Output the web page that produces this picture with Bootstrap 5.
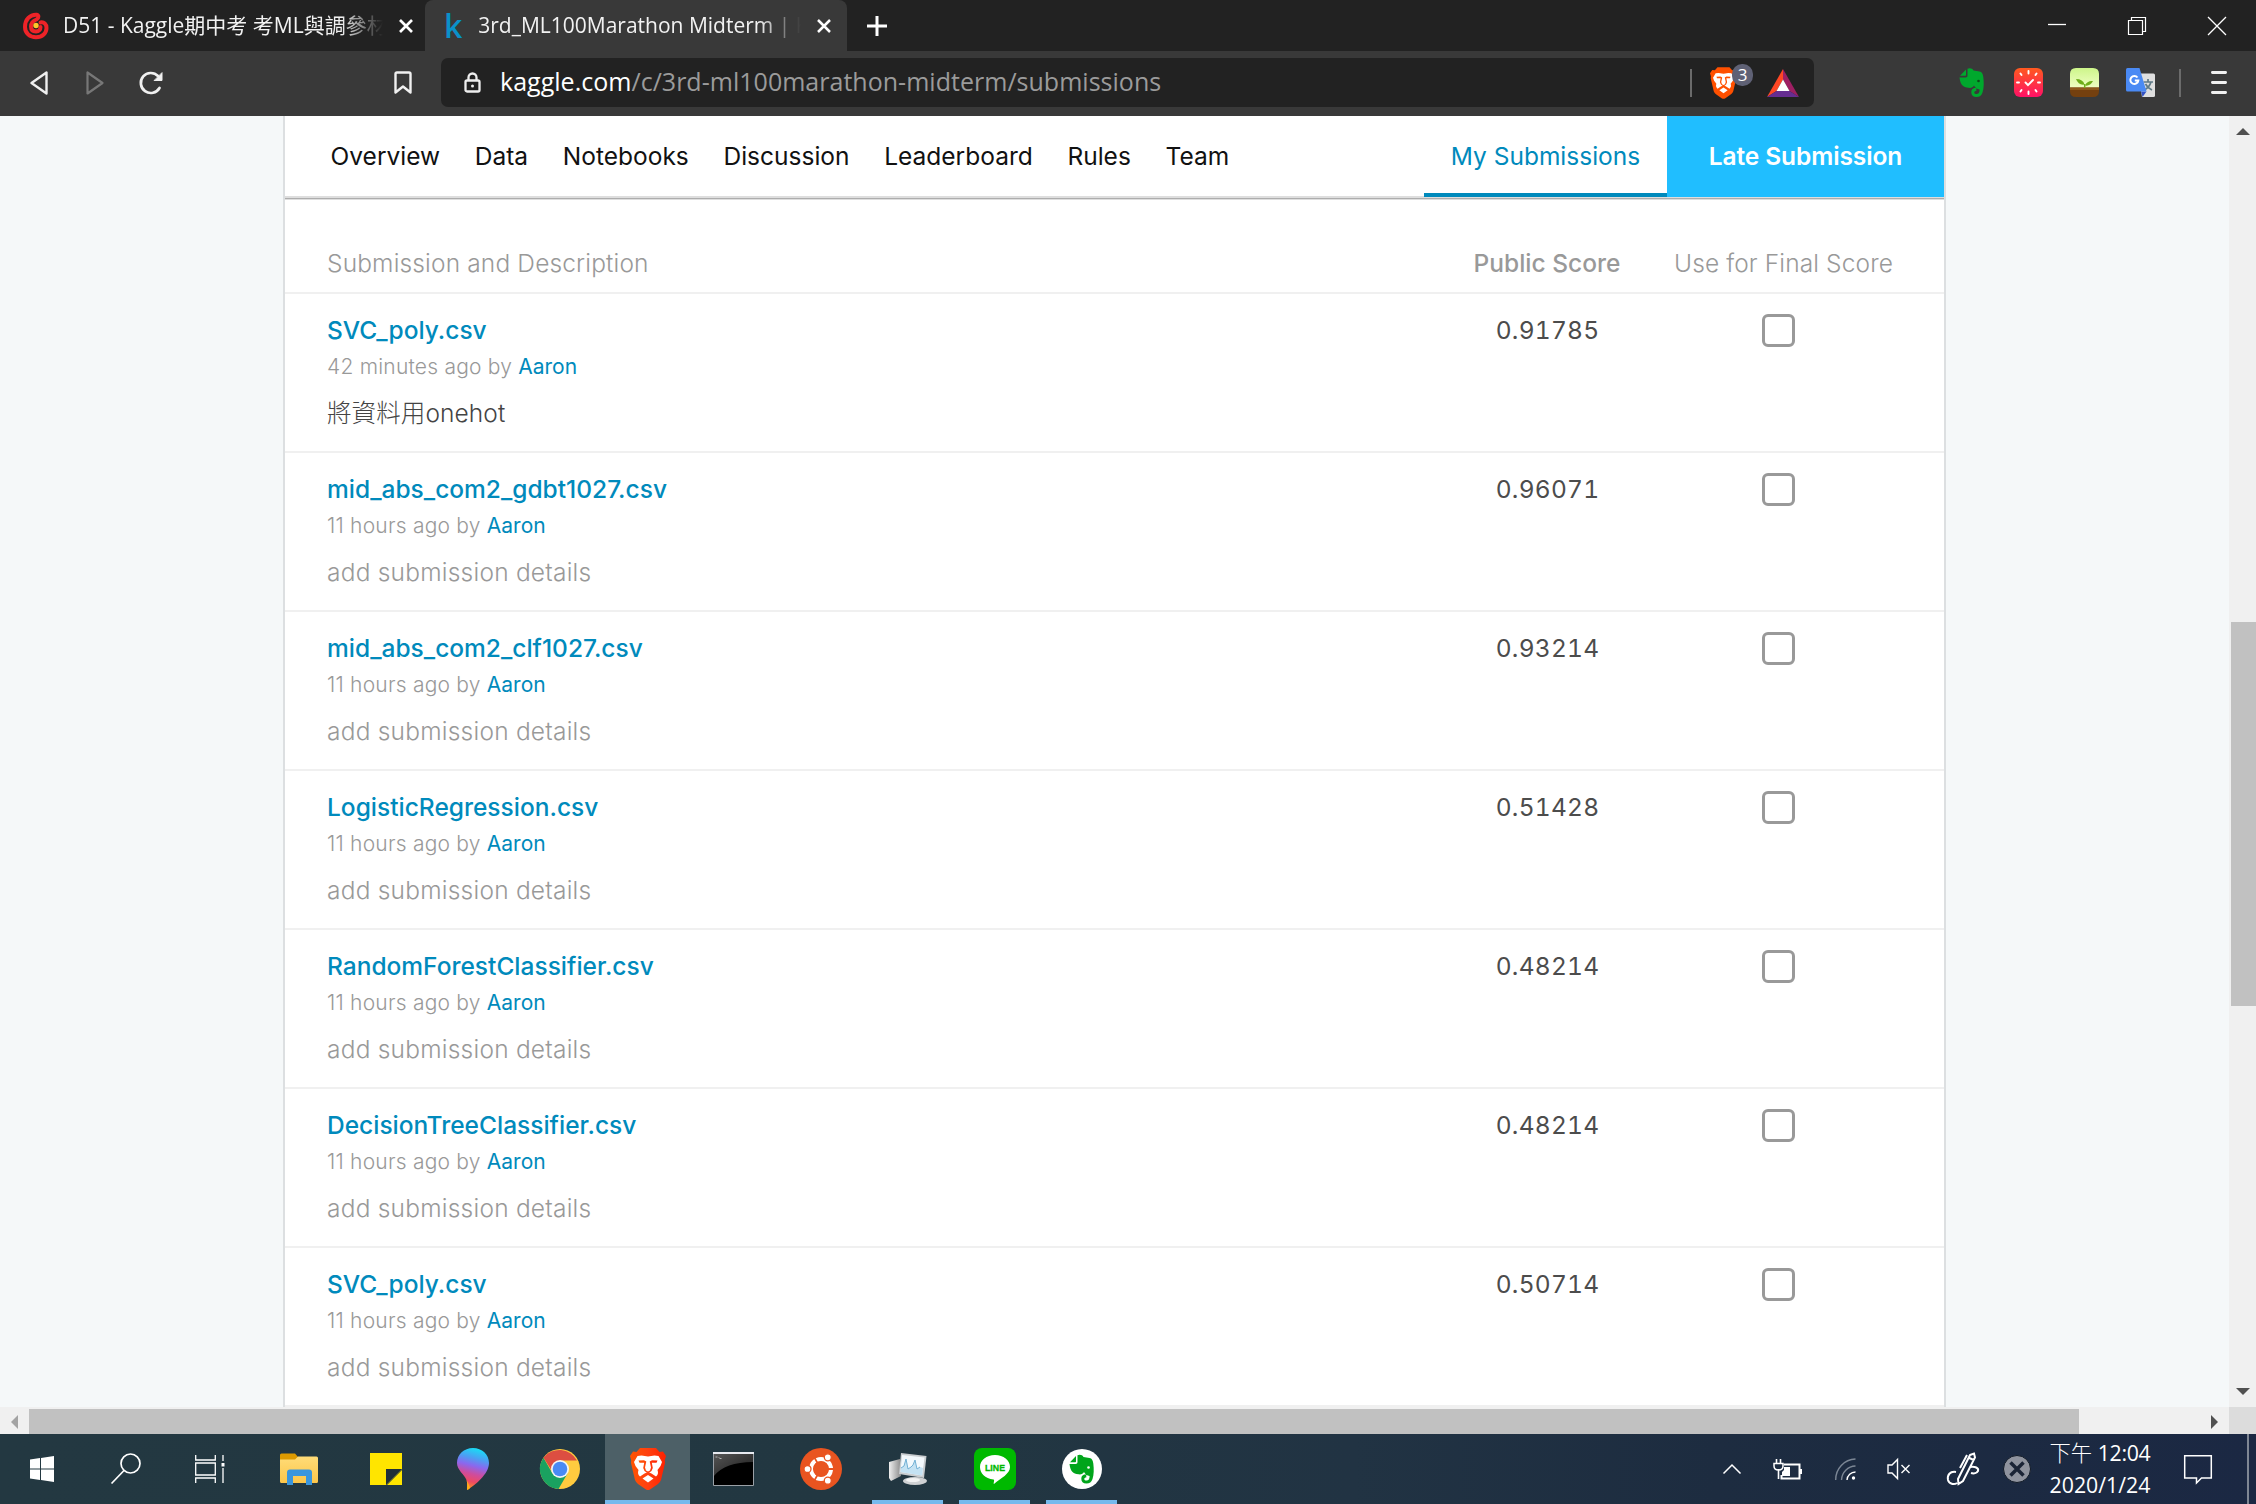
<!DOCTYPE html>
<html lang="zh-Hant">
<head>
<meta charset="utf-8">
<meta name="viewport" content="width=device-width, initial-scale=1">
<title>3rd_ML100Marathon Midterm | Kaggle</title>
<link rel="stylesheet" href="https://cdn.jsdelivr.net/npm/bootstrap@5.3.0/dist/css/bootstrap.min.css">
<style>
html,body{height:100%}
body{width:2256px;height:1504px;overflow:hidden;background:#f5f8f9;font-family:Inter,"Noto Sans CJK TC",sans-serif;font-size:24.5px;line-height:35px;color:#4c4c4c}
svg{display:block;flex:none;overflow:visible}
a{color:#008abc;text-decoration:none}

/* browser chrome */
.chrome-ui{font-family:"Open Sans","Noto Sans CJK TC",sans-serif}
.tabstrip{height:51px;background:#222;color:#f2f2f2;font-size:21px;line-height:51px}
.tab-idle{width:425px;padding-left:22px;padding-right:12px}
.tab-live{width:422px;padding-left:19px;padding-right:15px;background:#393939;border-radius:8px 8px 0 0}
.tab-title{overflow:hidden;-webkit-mask-image:linear-gradient(90deg,#000 calc(100% - 42px),transparent);mask-image:linear-gradient(90deg,#000 calc(100% - 42px),transparent)}
.k-mark{font-family:"Open Sans",sans-serif;font-size:32px;font-weight:600;color:#0a91c9;width:37px;line-height:47px}
.toolbar{height:65px;background:#393939;padding-bottom:2px}
.addr{width:1373px;height:49px;margin-left:29px;background:#222;border-radius:7px;padding-left:23px;font-size:25px;line-height:47px;color:#9b9b9b}
.addr b{font-weight:400;color:#fff}
.addr .url{letter-spacing:.02px;padding-bottom:2px}
.sep{width:2px;height:28px;background:#6b6b6b}
.shield-count{left:22px;top:-3px;width:21px;height:22px;border-radius:10px;background:#5f6175;font-size:17px;line-height:22px;color:#fff}

/* page */
.view{height:1291px}
.sheet{width:1663px;margin-left:283px;background:#fff;border:solid #dcdfe1;border-width:0 2px}
.comp-nav{height:84px;color:#000;line-height:81px;border-bottom:1px solid #dedede;box-shadow:inset 0 -1px #adadad,inset 0 -3px #dedede}
.comp-nav a{color:#111}
.comp-nav .links{padding-left:45.6px;gap:34.7px}
.comp-nav .mine{width:243px;height:81px;color:#008abc;box-shadow:inset 0 -4px #008abc}
.comp-nav .late{width:277px;height:81px;background:#20beff;color:#fff;font-weight:600;letter-spacing:-.1px}
.sub-head{height:92px;padding-top:46px;color:#999;font-weight:300}
.sub-row{height:159px;border-top:2px solid #f0f0f0;padding-top:19px}
.sub-head,.sub-row{padding-left:42px;padding-right:35px}
.c-score{width:200px}
.c-final{width:262px}
.sub-row .file{font-weight:500}
.sub-row .meta{font-size:21px;line-height:30px;margin-top:4px;color:#999;font-weight:300;letter-spacing:.22px}
.sub-row .meta a{font-weight:400;letter-spacing:0}
.sub-row .desc{margin-top:14px;color:#999;font-weight:300;letter-spacing:.22px}
.sub-row .desc.own{color:#444;letter-spacing:.1px}
.sub-row .c-score{font-feature-settings:"tnum";letter-spacing:.25px;padding-left:1px}
.sub-row .form-check-input{width:33px;height:33px;margin:1px 0 0;border:3px solid #999;border-radius:6px;background-color:#fff}

/* scrollbars */
.vbar{width:27px;background:#f0f0f0}
.vthumb{height:384px;margin-left:2px;background:#c1c1c1}
.hbar{height:27px;background:#f0f0f0}
.hthumb{width:2050px;height:25px;background:#c1c1c1}
.corner{width:27px;height:27px;background:#dcdcdc}

/* taskbar */
.taskbar{height:70px;background:linear-gradient(90deg,#233841 0,#223741 38%,#213343 60%,#1d2c40 76%,#1b2843 100%);color:#fff}
.slot3{width:84px}
.app{width:87px}
.app.run{background:linear-gradient(#76b9ed,#76b9ed) 50% 100%/71px 4px no-repeat}
.app.front{width:85px;margin-left:2px;background:#4d6067;border-bottom:4px solid #76b9ed;padding-top:4px}
.line-text{font:700 9.5px "Liberation Sans",sans-serif}
.clock{width:138px;padding-bottom:2px;font:400 21.3px/32px "Open Sans","Noto Sans CJK TC",sans-serif}
.clock span{letter-spacing:-.3px}
.clock i{font-style:normal;font-family:"Noto Sans CJK TC",sans-serif;font-weight:300}
</style>
<script src="https://cdn.jsdelivr.net/npm/bootstrap@5.3.0/dist/js/bootstrap.bundle.min.js"></script>
</head>
<body>
<svg width="0" height="0" class="position-absolute" aria-hidden="true">
  <defs>
    <linearGradient id="gBrave"><stop offset="0" stop-color="#ff5500"/><stop offset=".5" stop-color="#ff4010"/><stop offset="1" stop-color="#ff2000"/></linearGradient>
    <linearGradient id="gClock" x2="0" y2="1"><stop offset="0" stop-color="#ff5a1f"/><stop offset="1" stop-color="#ff1166"/></linearGradient>
    <linearGradient id="gLeaf" x2="0" y2="1"><stop offset="0" stop-color="#cdf58a"/><stop offset="1" stop-color="#f0ffc4"/></linearGradient>
    <linearGradient id="gFold" x2="0" y2="1"><stop offset="0" stop-color="#ffdc78"/><stop offset="1" stop-color="#fcc64a"/></linearGradient>
    <linearGradient id="gDrop" x1=".6" x2=".4" y2="1"><stop offset="0" stop-color="#16dff5"/><stop offset=".25" stop-color="#4f9cf2"/><stop offset=".42" stop-color="#8a68ee"/><stop offset=".62" stop-color="#cf4c9c"/><stop offset=".8" stop-color="#ee4a63"/><stop offset="1" stop-color="#ff9c1a"/></linearGradient>
    <linearGradient id="gCmd" x2="1" y2="1"><stop offset="0" stop-color="#555"/><stop offset="1" stop-color="#1a1a1a"/></linearGradient>
    <linearGradient id="gCase" x2="1"><stop offset="0" stop-color="#eee"/><stop offset="1" stop-color="#8b8b8b"/></linearGradient>
    <symbol id="lion" viewBox="0 0 36 42" overflow="visible">
      <path d="M10 0H26L29.500 4L33 3.500L36 8L34.800 12L35 15L31 32Q30 34.500 28 36L20 41.500Q18 42.500 16 41.500L8 36Q6 34.500 5 32L1 15L1.200 12L0 8L3 3.500L6.500 4Z"/>
      <path fill="#fff" d="M11.500 7.500L18 8.500L24.500 7.500L28.500 8L32 14L30.500 18L27.500 22Q29 26 26 28.500L21.500 25.500L18 24L14.500 25.500L10 28.500Q7 26 8.500 22L5.500 18L4 14L7.500 8ZM12.500 30.500L18 27L23.500 30.500L18 34.500Z"/>
      <path d="M8.500 12.600L14 12.200L16.300 13.500L15 19.500L16 22.500L18 23.500L20 22.500L21 19.500L19.700 13.500L22 12.200L27.500 12.600L26.500 14.800L21.800 14.800L22.800 20L21.500 23L18 25.500L14.500 23L13.200 20L14.200 14.800L9.500 14.800Z"/>
    </symbol>
    <symbol id="elephant" viewBox="0 0 25 29" overflow="visible">
      <path d="M8.500.8C10.500-.2 13.500.2 14.500 2.500L20.500 3.500C23 4 23.800 5.500 24.300 9C25 15 25 20 23.500 24.500C22.500 27.500 20.500 29 17.500 29C14 29 12.300 27 12.300 24.200C12.300 21.500 14 19.800 17.300 19.800V23C16 23 15.300 23.500 15.300 24.500C15.300 25.600 16.200 26 17.500 26C19.600 26 20.600 24.600 20.600 21.500C18 21 16.300 19.800 15 17.500C14 19.300 12 20.200 9.500 19.800C4 19 1.500 17.500 .5 9.500H6.500C8 9.500 8.500 8.800 8.500 7.500Z"/>
      <path d="M1 7.800L7 1.500V7Q7 7.800 6.200 7.800Z"/>
    </symbol>
  </defs>
</svg>

<div class="d-flex flex-column">
  <header class="chrome-ui">
    <div class="tabstrip d-flex">
      <div class="tab-idle d-flex align-items-center">
        <svg width="28" height="28" viewBox="0 0 28 28" fill="none"><path d="M14.500 2.800C8 2.500 3 7.500 3 15C3 21.500 8 25.200 14 25.200C20.500 25.200 24.500 21 24.500 16C24.500 12 22 9.800 18.500 10.500M14.500 2.800C17 3.500 17 6 14.500 7.500C10.500 9 9 11.500 9 14.500C9 17.800 11 19.500 14 19.500C17 19.500 18.500 17.500 18.500 15" stroke="#ee2328" stroke-width="4" stroke-linecap="round"/><circle cx="14" cy="13.500" r="2.700" fill="#ffc629"/></svg>
        <div class="tab-title text-nowrap flex-fill ms-0 me-3" style="padding-left:13px">D51 - Kaggle期中考 考ML與調參材</div>
        <svg width="14" height="14" viewBox="0 0 14 14" stroke="#fff" stroke-width="2.700"><path d="M1 1L13 13M13 1L1 13"/></svg>
      </div>
      <div class="tab-live d-flex align-items-center">
        <span class="k-mark">k</span>
        <div class="tab-title text-nowrap flex-fill me-3" style="padding-left:3px">3rd_ML100Marathon Midterm | Kaggle</div>
        <svg width="14" height="14" viewBox="0 0 14 14" stroke="#fff" stroke-width="2.500" style="margin-right:1px"><path d="M1 1L13 13M13 1L1 13"/></svg>
      </div>
      <div class="d-flex align-items-center flex-fill" style="padding-left:20px">
        <svg width="20" height="20" stroke="#fff" stroke-width="3"><path d="M10 0V20M0 10H20"/></svg>
      </div>
      <div class="d-flex align-items-center" style="gap:62px;padding-right:30px">
        <svg width="18" height="18" stroke="#fff" stroke-width="1.300"><path d="M0 7.500H18"/></svg>
        <svg width="18" height="18" fill="none" stroke="#fff" stroke-width="1.200"><path d="M.500 3.500h14v14h-14zM3.500 3.500V.500h14v14h-3"/></svg>
        <svg width="18" height="18" stroke="#fff" stroke-width="1.300"><path d="M0 0L18 18M18 0L0 18"/></svg>
      </div>
    </div>
    <div class="toolbar d-flex align-items-center">
      <svg width="18" height="24" viewBox="0 0 18 24" fill="none" stroke="#f0f0f0" stroke-width="2.400" stroke-linejoin="round" style="margin-left:30px"><path d="M16.500 1.500V22.500L1.500 12Z"/></svg>
      <svg width="18" height="24" viewBox="0 0 18 24" fill="none" stroke="#777" stroke-width="2.200" stroke-linejoin="round" style="margin-left:38px"><path d="M1.500 1.500V22.500L16.500 12Z"/></svg>
      <svg width="24" height="24" viewBox="0 0 24 24" fill="none" stroke="#f0f0f0" stroke-width="2.700" stroke-linecap="round" style="margin-left:35px"><path d="M20.500 17A10 10 0 1 1 19 5"/><path d="M23 2V9.500H15.500Z" fill="#f0f0f0" stroke-width="1"/></svg>
      <svg width="18" height="23" viewBox="0 0 18 23" fill="none" stroke="#f0f0f0" stroke-width="2.400" stroke-linejoin="round" style="margin-left:231px"><path d="M1.500 3Q1.500 1.500 3 1.500H15Q16.500 1.500 16.500 3V21.500L9 15.500L1.500 21.500Z"/></svg>
      <div class="addr d-flex align-items-center">
        <svg width="17" height="21" viewBox="0 0 17 21" fill="none" stroke="#eee" stroke-width="2.300"><rect x="1.500" y="8.500" width="14" height="11" rx="1.500"/><path d="M4.500 8V5.500A4 4 0 0 1 12.500 5.500V8"/><circle cx="8.500" cy="14" r="1.500" fill="#eee" stroke="none"/></svg>
        <div class="url text-nowrap" style="margin-left:19px"><b>kaggle.com</b>/c/3rd-ml100marathon-midterm/submissions</div>
        <div class="d-flex align-items-center ms-auto" style="padding-right:15px">
          <div class="sep"></div>
          <div class="position-relative" style="margin-left:18px"><svg width="27" height="32" fill="#ff5000"><use href="#lion"/></svg><span class="shield-count position-absolute text-center">3</span></div>
          <svg width="32" height="28" viewBox="0 0 32 28" style="margin-left:30px"><path d="M16 0L0 28L9.500 22L16 10.500Z" fill="#ff4724"/><path d="M16 0L32 28L22.500 22L16 10.500Z" fill="#9e1f63"/><path d="M0 28H32L22.500 22H9.500Z" fill="#662d91"/><path d="M16 10.500L22.500 22H9.500Z" fill="#fff"/></svg>
        </div>
      </div>
      <div class="d-flex align-items-center ms-auto" style="padding-right:29px">
        <svg width="25" height="29" fill="#00a82d"><use href="#elephant"/><circle cx="19.500" cy="13" r="1.300" fill="#0b4a1a"/></svg>
        <svg width="29" height="29" viewBox="0 0 29 29" style="margin-left:30px"><rect width="29" height="29" rx="6" fill="url(#gClock)"/><g stroke="#fff" stroke-width="1.900" stroke-linecap="round" fill="none"><path d="M14.500 3v2.500M14.500 23.500v2.500M3 14.500h2M24 14.500H26M6.500 5.500l1 1.500M22.500 5.500l-1 1.500M6.500 23.500l1-1.500M22.500 23.500l-1-1.500"/><path d="M11.500 14.500l2.500 2.700l5-5.200"/></g></svg>
        <svg width="29" height="29" viewBox="0 0 29 29" style="margin-left:27px"><path d="M6 0H23Q29 0 29 6V20H0V6Q0 0 6 0Z" fill="url(#gLeaf)"/><path d="M0 19.500H29V23Q29 29 23 29H6Q0 29 0 23Z" fill="#74400f"/><path d="M0 19.500H29V22H0Z" fill="#8e5a1c"/><path d="M6 11Q13 11 14.500 16.500Q8.500 17.500 6 11ZM23 13Q17 12.500 15 17.500Q20 18.500 23 13Z" fill="#6fae19"/><path d="M14.700 16V20" stroke="#6fae19" stroke-width="1.500"/></svg>
        <svg width="29" height="29" viewBox="0 0 29 29" style="margin-left:27px"><path d="M12 5.500H27.500Q29 5.500 29 7V27.500Q29 29 27.500 29H16Z" fill="#dfdfdf"/><path d="M17.500 14H27M22 11V14M25 14Q23.500 19 18.500 22M19.500 16Q21.500 20 26 22" stroke="#5f7a86" stroke-width="1.700" fill="none"/><path d="M15 23.500H20.500L16.500 29Z" fill="#3352c4"/><path d="M1.500 0H13.500L20.500 23.500H1.500Q0 23.500 0 22V1.500Q0 0 1.500 0Z" fill="#4a8af4"/><path d="M11.500 9.500A4 4 0 1 0 12.300 12.500H8.800" stroke="#fff" stroke-width="2" fill="none"/></svg>
        <div class="sep" style="margin-left:24px"></div>
        <svg width="16" height="23" stroke="#f0f0f0" stroke-width="2.800" stroke-linecap="round" style="margin-left:30px"><path d="M1.400 1.500H14.600M1.400 11.500H14.600M1.400 21.500H14.600"/></svg>
      </div>
    </div>
  </header>

  <div class="view d-flex overflow-hidden">
    <main class="flex-fill">
      <div class="sheet">
        <nav class="comp-nav d-flex">
          <div class="links d-flex flex-fill"><a href="#">Overview</a><a href="#">Data</a><a href="#">Notebooks</a><a href="#">Discussion</a><a href="#">Leaderboard</a><a href="#">Rules</a><a href="#">Team</a></div>
          <a href="#" class="mine text-center">My Submissions</a>
          <a href="#" class="late text-center">Late Submission</a>
        </nav>
        <div class="sub-head d-flex">
          <div class="flex-fill" style="letter-spacing:.15px">Submission and Description</div>
          <div class="c-score text-center" style="font-weight:500">Public Score</div>
          <div class="c-final text-center" style="padding-left:11px;letter-spacing:.12px">Use for Final Score</div>
        </div>
        <section class="sub-row d-flex">
          <div class="flex-fill"><a href="#" class="file d-block">SVC_poly.csv</a><div class="meta">42 minutes ago by <a href="#">Aaron</a></div><div class="desc own">將資料用onehot</div></div>
          <div class="c-score text-center">0.91785</div>
          <div class="c-final d-flex justify-content-center"><input class="form-check-input" type="checkbox"></div>
        </section>
        <section class="sub-row d-flex">
          <div class="flex-fill"><a href="#" class="file d-block">mid_abs_com2_gdbt1027.csv</a><div class="meta">11 hours ago by <a href="#">Aaron</a></div><div class="desc">add submission details</div></div>
          <div class="c-score text-center">0.96071</div>
          <div class="c-final d-flex justify-content-center"><input class="form-check-input" type="checkbox"></div>
        </section>
        <section class="sub-row d-flex">
          <div class="flex-fill"><a href="#" class="file d-block">mid_abs_com2_clf1027.csv</a><div class="meta">11 hours ago by <a href="#">Aaron</a></div><div class="desc">add submission details</div></div>
          <div class="c-score text-center">0.93214</div>
          <div class="c-final d-flex justify-content-center"><input class="form-check-input" type="checkbox"></div>
        </section>
        <section class="sub-row d-flex">
          <div class="flex-fill"><a href="#" class="file d-block">LogisticRegression.csv</a><div class="meta">11 hours ago by <a href="#">Aaron</a></div><div class="desc">add submission details</div></div>
          <div class="c-score text-center">0.51428</div>
          <div class="c-final d-flex justify-content-center"><input class="form-check-input" type="checkbox"></div>
        </section>
        <section class="sub-row d-flex">
          <div class="flex-fill"><a href="#" class="file d-block">RandomForestClassifier.csv</a><div class="meta">11 hours ago by <a href="#">Aaron</a></div><div class="desc">add submission details</div></div>
          <div class="c-score text-center">0.48214</div>
          <div class="c-final d-flex justify-content-center"><input class="form-check-input" type="checkbox"></div>
        </section>
        <section class="sub-row d-flex">
          <div class="flex-fill"><a href="#" class="file d-block">DecisionTreeClassifier.csv</a><div class="meta">11 hours ago by <a href="#">Aaron</a></div><div class="desc">add submission details</div></div>
          <div class="c-score text-center">0.48214</div>
          <div class="c-final d-flex justify-content-center"><input class="form-check-input" type="checkbox"></div>
        </section>
        <section class="sub-row d-flex">
          <div class="flex-fill"><a href="#" class="file d-block">SVC_poly.csv</a><div class="meta">11 hours ago by <a href="#">Aaron</a></div><div class="desc">add submission details</div></div>
          <div class="c-score text-center">0.50714</div>
          <div class="c-final d-flex justify-content-center"><input class="form-check-input" type="checkbox"></div>
        </section>
        <section class="sub-row"></section>
      </div>
    </main>
    <div class="vbar d-flex flex-column">
      <svg width="27" height="506"><path d="M7 19L14 12L21 19Z" fill="#505050"/></svg>
      <div class="vthumb"></div>
      <svg width="27" height="27" class="mt-auto"><path d="M7 8L14 15L21 8Z" fill="#505050"/></svg>
    </div>
  </div>

  <div class="hbar d-flex">
    <svg width="29" height="27"><path d="M18 8V22L11 15Z" fill="#a3a3a3"/></svg>
    <div class="hthumb align-self-end"></div>
    <svg width="27" height="27" class="ms-auto"><path d="M9 8V22L16 15Z" fill="#505050"/></svg>
    <div class="corner"></div>
  </div>

  <footer class="taskbar d-flex align-items-stretch">
    <div class="slot3 d-flex align-items-center justify-content-center"><svg width="24" height="28" viewBox="0 0 24 28" fill="#fff"><path d="M0 4.500L10 3V13.500H0ZM11 2.900L24 1V13.500H11ZM0 14.500H10V25L0 23.500ZM11 14.500H24V27L11 25.100Z"/></svg></div>
    <div class="slot3 d-flex align-items-center justify-content-center"><svg width="30" height="34" viewBox="0 0 30 34" fill="none" stroke="#fff" stroke-width="1.700"><circle cx="19.500" cy="11.500" r="9.500"/><path d="M13 18.500L.500 31.500"/></svg></div>
    <div class="slot3 d-flex align-items-center justify-content-center"><svg width="30" height="28" viewBox="0 0 30 28" fill="none" stroke="#fff" stroke-width="1.300"><path d="M.700 0V5H20.300V0M.700 8h19.600v12H.700zM.700 28V23H20.300V28M28 0V6M28 13V28"/><path d="M26.500 8h3v3.500h-3z" fill="#fff" stroke="none"/></svg></div>
    <div class="app d-flex align-items-center justify-content-center" style="margin-left:3px"><svg width="38" height="32" viewBox="0 0 38 32"><path d="M0 2Q0 .500 1.500 .500H15L18 4V9H0Z" fill="#dd9a00"/><path d="M0 6.500H15L18 3.500H36.500Q38 3.500 38 5V28.500Q38 30 36.500 30H1.500Q0 30 0 28.500Z" fill="url(#gFold)"/><path d="M7 32V19.500Q7 16.500 10 16.500H29Q32 16.500 32 19.500V32H26V23H13V32Z" fill="#3a96dd"/></svg></div>
    <div class="app d-flex align-items-center justify-content-center"><svg width="32" height="32" viewBox="0 0 32 32"><path d="M0 0H32V16L16 32H0Z" fill="#ffe500"/><path d="M16 32V16H32Z" fill="#1f2f38"/><path d="M17 32H32V17Z" fill="#ffe500"/></svg></div>
    <div class="app d-flex align-items-center justify-content-center"><svg width="32" height="42" viewBox="0 0 32 42"><path d="M16 0C25 0 32 6.500 32 15C32 26 18 37 10.500 42C9.500 41 11 37 9.500 32C7 26 0 22 0 15C0 6.500 7 0 16 0Z" fill="url(#gDrop)"/><path d="M9.500 32C11 35 12 36 13 40L10.500 42C9.500 41 11 37 9.500 32Z" fill="#ffae17"/></svg></div>
    <div class="app d-flex align-items-center justify-content-center"><svg width="40" height="40" viewBox="0 0 40 40"><circle cx="20" cy="20" r="20" fill="#ffcb3f"/><path d="M3.500 8.700A20 20 0 0 0 18.500 40L27.500 24.500L12.500 24.500Z" fill="#1aa260"/><path d="M3.500 8.700A20 20 0 0 1 37 11.500H20L12 22Z" fill="#dc4e41"/><circle cx="20" cy="20" r="9" fill="#f4f4f4"/><circle cx="20" cy="20" r="7.300" fill="#4a8af4"/></svg></div>
    <div class="app front d-flex align-items-center justify-content-center"><svg width="36" height="42" fill="url(#gBrave)"><use href="#lion"/></svg></div>
    <div class="app d-flex align-items-center justify-content-center"><svg width="41" height="34" viewBox="0 0 41 34"><path d="M.500 .500H40.500V33.500H.500Z" fill="#000" stroke="#9aa0a6"/><path d="M1 2H40V10Q12 10 1 24Z" fill="url(#gCmd)"/><path d="M0 0H41V2H0Z" fill="#e8eaf0"/><path d="M2.500 5h2M6 5v.800M6.500 6.500h2" stroke="#ccc" stroke-width=".800"/></svg></div>
    <div class="app d-flex align-items-center justify-content-center"><svg width="42" height="42" viewBox="0 0 42 42"><circle cx="21" cy="21" r="21" fill="#e95420"/><circle cx="21" cy="21" r="10" fill="none" stroke="#fff" stroke-width="4"/><g stroke="#e95420" stroke-width="1.800"><path d="M21 21H35M21 21L14 8.900M21 21L14 33.100" /></g><circle cx="21" cy="21" r="7.500" fill="#e95420"/><g fill="#fff" stroke="#e95420" stroke-width="1.300"><circle cx="7.500" cy="21" r="3.500"/><circle cx="27.800" cy="9.300" r="3.500"/><circle cx="27.800" cy="32.700" r="3.500"/></g></svg></div>
    <div class="app run d-flex align-items-center justify-content-center"><svg width="38" height="32" viewBox="0 0 38 32"><path d="M0 9L11 6L12 23L2 28L0 25Z" fill="url(#gCase)"/><path d="M12 0L37.500 3L35 25L10 21Z" fill="#c9cdd0"/><path d="M13 2L35.500 4.500L33.200 22.500L11.500 19Z" fill="#f3f9fd"/><path d="M12 15L15 13L17 6L19 16L22 14L24 12L26 7L28 16L31 14L34 15L33.200 22.500L11.500 19Z" fill="#c4e2f3"/><path d="M12 15L15 13L17 6L19 16L22 14L24 12L26 7L28 16L31 14" fill="none" stroke="#72b0d4"/><ellipse cx="26" cy="28" rx="12" ry="4" fill="#cfd1d3"/><ellipse cx="24" cy="27" rx="7" ry="2" fill="#f2f2f2"/></svg></div>
    <div class="app run d-flex align-items-center justify-content-center"><svg width="42" height="42" viewBox="0 0 42 42"><rect width="42" height="42" rx="8" fill="#00b900"/><path d="M21 7C29.500 7 36 12 36 19C36 26 27 30 20 36C19 35.500 21 32 19.500 31.500C11 30.500 6 25.500 6 19C6 12 12.500 7 21 7Z" fill="#fff"/><text x="21" y="23" text-anchor="middle" fill="#00b900" stroke="#00b900" stroke-width=".300" class="line-text" textLength="20" lengthAdjust="spacingAndGlyphs">LINE</text></svg></div>
    <div class="app run d-flex align-items-center justify-content-center"><svg width="40" height="40" viewBox="0 0 40 40"><circle cx="20" cy="20" r="20" fill="#fff"/><svg x="7" y="5.500" width="25" height="29" fill="#00a51b"><use href="#elephant"/><circle cx="19.500" cy="13" r="1.300" fill="#fff"/></svg></svg></div>

    <div class="d-flex align-items-center ms-auto">
      <div class="d-flex justify-content-center" style="width:52px"><svg width="18" height="10" fill="none" stroke="#fff" stroke-width="1.500"><path d="M.500 9.500L9 1L17.500 9.500"/></svg></div>
      <div class="d-flex justify-content-center" style="width:60px"><svg width="28" height="21" viewBox="0 0 28 21" fill="none" stroke="#fff"><path d="M10 5.500H25.500V19.500H7.500V16" stroke-width="2"/><path d="M26 10H28V15H26ZM10 8H16V17H8V13L10 11Z" fill="#fff" stroke="none"/><path d="M2.500 0V5M6.500 0V5M4.500 10V20" stroke-width="1.600"/><path d="M0 4.500H9V7Q9 11 4.500 11Q0 11 0 7Z" stroke-width="1.500"/></svg></div>
      <div class="d-flex justify-content-center" style="width:55px"><svg width="21" height="22" viewBox="0 0 21 22" fill="none" stroke-width="1.400"><path d="M.700 22A20.500 20.500 0 0 1 20.500 1M6.500 22A14.500 14.500 0 0 1 20.500 8" stroke="#7c8795"/><path d="M12 22A8.500 8.500 0 0 1 20.500 14" stroke="#fff"/><circle cx="18.500" cy="20" r="1.700" fill="#fff"/></svg></div>
      <div class="d-flex justify-content-center" style="width:51px"><svg width="24" height="22" viewBox="0 0 24 22" fill="none" stroke="#fff" stroke-width="1.400"><path d="M1 7H5L10.500 1.500V20.500L5 15H1ZM14.500 7L22.500 15M22.500 7L14.500 15"/></svg></div>
      <div class="d-flex justify-content-center" style="width:78px"><svg width="32" height="34" viewBox="0 0 32 34" fill="none" stroke="#fff" stroke-width="2"><path d="M23 3L27 1.500L28 5.500L16 29L11.500 32L11 27ZM22.500 6L26.500 8M20 3L13 16M9 20C3 19 0 23 1 28C2 32 7 33 10 31M23 15C28 14 32 16 31 19C30 21 27 22 24 21"/></svg></div>
      <div class="d-flex justify-content-center" style="width:29px"><svg width="28" height="28" viewBox="0 0 28 28"><circle cx="14" cy="14" r="13.500" fill="#8f939e" stroke="#111a26"/><path d="M7.500 7.500L20.500 20.500M20.500 7.500L7.500 20.500" stroke="#1b2436" stroke-width="3.500"/></svg></div>
      <div class="clock text-center"><i>下午</i> <span>12:04</span><br>2020/1/24</div>
      <div class="d-flex justify-content-center" style="width:58px"><svg width="28" height="29" viewBox="0 0 28 29" fill="none" stroke="#fff" stroke-width="1.500"><path d="M.700 .700H27.300V23H17.500L12.500 28V23H.700Z"/></svg></div>
      <div style="width:2px;height:70px;margin-left:20px;margin-right:7px;background:#7f8794"></div>
    </div>
  </footer>
</div>
</body>
</html>
